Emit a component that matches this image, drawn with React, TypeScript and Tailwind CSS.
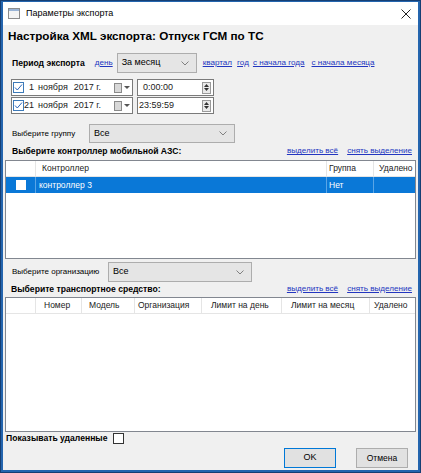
import React from "react";

const font = { fontFamily: '"Liberation Sans", Arial, sans-serif' };

const Link = ({ children, className = "" }: { children: React.ReactNode; className?: string }) => (
  <span className={`text-[8.1px] text-[#2336c0] underline whitespace-nowrap cursor-pointer ${className}`}>{children}</span>
);

const Chevron = () => (
  <svg width="8" height="5" viewBox="0 0 8 5" className="shrink-0">
    <path d="M0.5 0.5l3.5 3.5L7.5 0.5" fill="none" stroke="#808080" strokeWidth="1" />
  </svg>
);

const Combo = ({ value, className }: { value: string; className: string }) => (
  <div className={`flex items-center justify-between bg-[#e5e5e5] border border-[#adadad] pl-[4px] pr-[7px] text-[9px] text-black whitespace-nowrap ${className}`}>
    <span>{value}</span>
    <Chevron />
  </div>
);

const Check = ({ checked = false, className = "" }: { checked?: boolean; className?: string }) => (
  <div className={`w-[11px] h-[11px] bg-white border flex items-center justify-center shrink-0 ${checked ? "border-[#3d7ab8]" : "border-[#333]"} ${className}`}>
    {checked && (
      <svg width="9" height="9" viewBox="0 0 9 9">
        <path d="M1 4.5l2.3 2.5L8 1.5" fill="none" stroke="#2a64b8" strokeWidth="1" />
      </svg>
    )}
  </div>
);

const CalendarDrop = () => (
  <div className="flex items-center gap-[2px] ml-auto mr-[2px]">
    <div className="w-[8px] h-[10px] bg-[#d8d8d8] border border-[#8a8a8a]" />
    <svg width="6" height="3" viewBox="0 0 6 3">
      <path d="M0 0h6L3 3z" fill="#555" />
    </svg>
  </div>
);

const Spinner = () => (
  <div className="ml-auto mr-[2px] w-[9px] h-[12px] border border-[#9a9a9a] bg-[#eaeaea] flex flex-col items-center justify-center gap-[1px]">
    <svg width="5" height="3" viewBox="0 0 5 3">
      <path d="M0 3h5L2.5 0z" fill="#333" />
    </svg>
    <svg width="5" height="3" viewBox="0 0 5 3">
      <path d="M0 0h5L2.5 3z" fill="#333" />
    </svg>
  </div>
);

const DateRow = ({ day, time, tight }: { day: string; time: string; tight?: boolean }) => (
  <div className="flex items-center gap-[4px] h-[17px] whitespace-nowrap">
    <div className="w-[122px] h-[17px] bg-white border border-[#7a7a7a] flex items-center pl-[1px] text-[9px] text-[#222]">
      <Check checked />
      <span className="w-[10px] text-right">{day}</span>
      <span className="ml-[4px]">ноября</span>
      <span className="ml-[6px]">2017 г.</span>
      <CalendarDrop />
    </div>
    <div className="w-[77px] h-[17px] bg-white border border-[#7a7a7a] flex items-center text-[9px] text-[#222]">
      <span className={tight ? "pl-[1px]" : "pl-[5px]"}>{time}</span>
      <Spinner />
    </div>
  </div>
);

type Col = { label: string; w: string; pad: string };

const Header = ({ cols }: { cols: Col[] }) => (
  <div className="flex h-[16px] border-b border-[#e5e5e5] text-[8.5px] text-[#222] whitespace-nowrap">
    {cols.map((c, i) => (
      <div key={i} className={`${c.w} ${c.pad} border-r border-[#e5e5e5] flex items-center last:border-r-0`}>
        {c.label}
      </div>
    ))}
  </div>
);

export default function App() {
  return (
    <div style={font} className="w-[421px] h-[473px] bg-[#163f74] p-[1px]">
      <div className="w-full h-full bg-[#2465ae] px-[2px] pt-[1px] pb-[2px] flex flex-col">
        {/* title bar */}
        <div className="h-[23px] bg-white flex items-center pl-[5px] pr-[7px] shrink-0">
          <svg width="12" height="11" viewBox="0 0 12 11">
            <rect x="0.5" y="0.5" width="11" height="10" fill="#f4f4f4" stroke="#8c8c8c" />
            <rect x="1" y="1" width="10" height="2" fill="#9ab4d6" />
          </svg>
          <span className="ml-[6px] text-[9px] text-black whitespace-nowrap">Параметры экспорта</span>
          <svg width="10" height="10" viewBox="0 0 10 10" className="ml-auto">
            <path d="M0.5 0.5l9 9M9.5 0.5l-9 9" stroke="#222" strokeWidth="1" />
          </svg>
        </div>

        {/* body */}
        <div className="flex-1 bg-[#f0f0f0] flex flex-col px-[2px] text-black">
          <div className="h-[19px] mt-[1px] flex items-center pl-[3px] text-[11.7px] font-bold whitespace-nowrap">
            Настройка XML экспорта: Отпуск ГСМ по ТС
          </div>

          {/* period */}
          <div className="flex items-center mt-[8px] h-[20px] pl-[7px] whitespace-nowrap">
            <span className="text-[8.6px] font-bold">Период экспорта</span>
            <Link className="ml-[10px]">день</Link>
            <Combo value="За месяц" className="ml-[4px] w-[80px] h-[20px]" />
            <Link className="ml-[6px]">квартал</Link>
            <Link className="ml-[5px]">год</Link>
            <Link className="ml-[4px]">с начала года</Link>
            <Link className="ml-[7px]">с начала месяца</Link>
          </div>

          <div className="flex flex-col gap-[1px] mt-[6px] pl-[6px]">
            <DateRow day="1" time="0:00:00" />
            <DateRow day="21" time="23:59:59" tight />
          </div>

          {/* group */}
          <div className="flex items-center mt-[10px] h-[19px] pl-[7px] whitespace-nowrap">
            <span className="text-[8px] w-[77px]">Выберите группу</span>
            <Combo value="Все" className="w-[146px] h-[19px]" />
          </div>

          <div className="flex items-center h-[17px] pl-[7px] pr-[4px] whitespace-nowrap">
            <span className="text-[8.6px] font-bold">Выберите контроллер мобильной АЗС:</span>
            <Link className="ml-auto">выделить всё</Link>
            <Link className="ml-[9px]">снять выделение</Link>
          </div>

          {/* controllers */}
          <div className="h-[99px] bg-white border border-[#828790] flex flex-col">
            <Header
              cols={[
                { label: "", w: "w-[30px]", pad: "" },
                { label: "Контроллер", w: "w-[291px]", pad: "pl-[6px]" },
                { label: "Группа", w: "w-[47px]", pad: "pl-[2px]" },
                { label: "Удалено", w: "flex-1", pad: "pl-[5px]" },
              ]}
            />
            <div className="flex h-[16px] bg-[#0a78d7] text-white text-[8.5px] whitespace-nowrap">
              <div className="w-[30px] flex items-center justify-center border-r border-[#5aa5e6]">
                <div className="w-[10px] h-[10px] bg-white" />
              </div>
              <div className="w-[291px] flex items-center pl-[3px] border-r border-[#5aa5e6]">контроллер 3</div>
              <div className="w-[47px] flex items-center pl-[2px] border-r border-[#5aa5e6]">Нет</div>
              <div className="flex-1" />
            </div>
          </div>

          {/* organisation */}
          <div className="flex items-center mt-[3px] h-[20px] pl-[7px] whitespace-nowrap">
            <span className="text-[8px] w-[96px]">Выберите организацию</span>
            <Combo value="Все" className="w-[144px] h-[20px]" />
          </div>

          <div className="flex items-center h-[14px] pl-[6px] pr-[4px] whitespace-nowrap">
            <span className="text-[8.6px] font-bold">Выберите транспортное средство:</span>
            <Link className="ml-auto">выделить всё</Link>
            <Link className="ml-[9px]">снять выделение</Link>
          </div>

          {/* vehicles */}
          <div className="h-[135px] mt-[1px] bg-white border border-[#828790] flex flex-col">
            <Header
              cols={[
                { label: "", w: "w-[30px]", pad: "" },
                { label: "Номер", w: "w-[46px]", pad: "pl-[8px]" },
                { label: "Модель", w: "w-[53px]", pad: "pl-[7px]" },
                { label: "Организация", w: "w-[67px]", pad: "pl-[3px]" },
                { label: "Лимит на день", w: "w-[80px]", pad: "pl-[9px]" },
                { label: "Лимит на месяц", w: "w-[88px]", pad: "pl-[9px]" },
                { label: "Удалено", w: "flex-1", pad: "pl-[4px]" },
              ]}
            />
          </div>

          <div className="flex items-center h-[12px] pl-[1px] whitespace-nowrap">
            <span className="text-[8.6px] font-bold">Показывать удаленные</span>
            <Check className="ml-[6px]" />
          </div>

          <div className="flex justify-end gap-[20px] mt-[4px] pr-[8px]">
            <button className="w-[52px] h-[20px] bg-[#e1e1e1] border border-[#0078d7] text-[9px]">OK</button>
            <button className="w-[52px] h-[20px] bg-[#e1e1e1] border border-[#adadad] text-[8.5px]">Отмена</button>
          </div>
        </div>
      </div>
    </div>
  );
}
